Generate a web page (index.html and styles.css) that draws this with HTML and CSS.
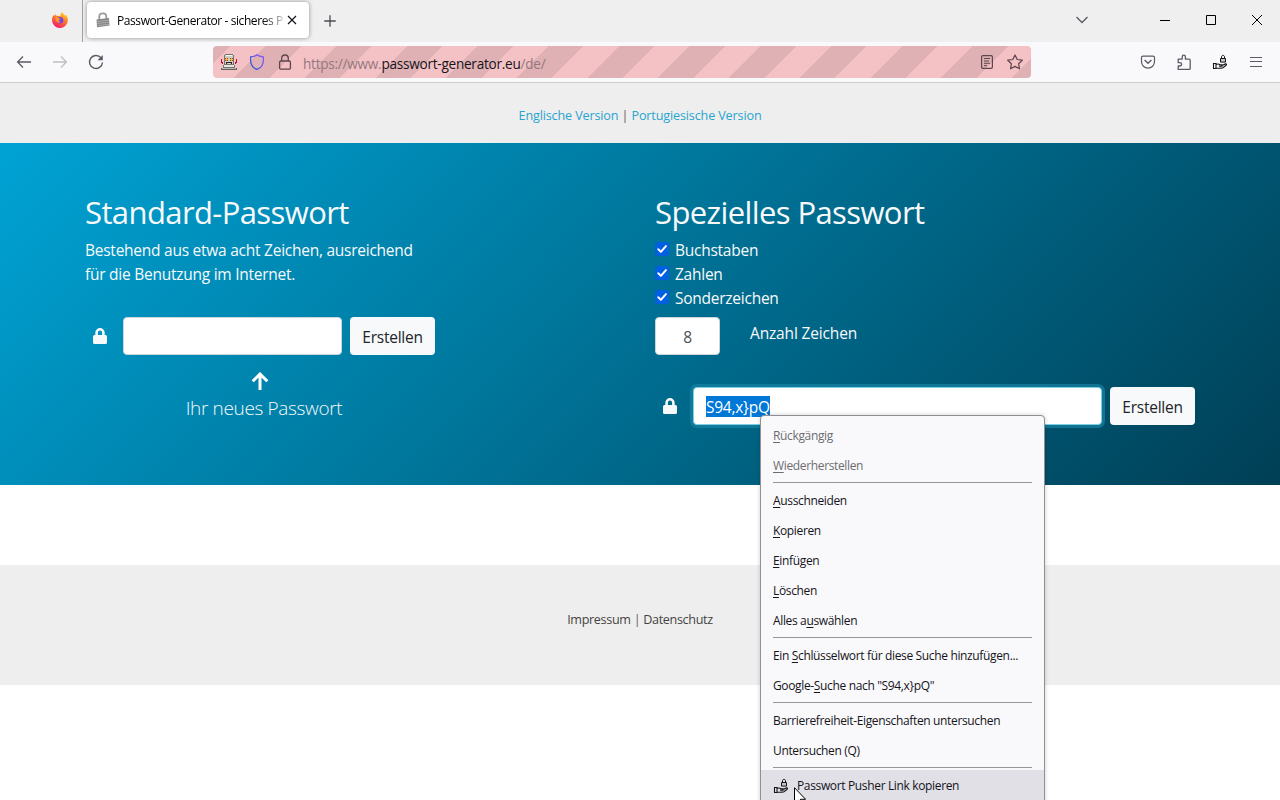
FILE: index.html
```html
<!DOCTYPE html>
<html lang="de">
<head>
<meta charset="utf-8">
<title>Passwort-Generator - sicheres Passwort</title>
<link rel="stylesheet" href="styles.css">
</head>
<body>
<svg class="defs" width="0" height="0">
  <symbol id="lock" viewBox="0 0 14 16"><path fill="currentColor" fill-rule="evenodd" d="M1.500 7H2.300V4.700a4.700 4.700 0 0 1 9.400 0V7h.8A1.500 1.500 0 0 1 14 8.500v6A1.500 1.500 0 0 1 12.500 16h-11A1.500 1.500 0 0 1 0 14.500v-6A1.500 1.500 0 0 1 1.500 7zM4.900 7h4.200V4.700a2.100 2.100 0 0 0-4.200 0z"/></symbol>
  <symbol id="check" viewBox="0 0 14 14"><rect width="14" height="14" rx="2" fill="#0060df"/><path d="M3.300 7.300l2.600 2.600 5-5.800" fill="none" stroke="#fff" stroke-width="2" stroke-linecap="round" stroke-linejoin="round"/></symbol>
  <symbol id="push" viewBox="0 0 16 16"><g fill="none" stroke="currentColor"><path d="M1.500 9.500h2.500v5H1.500zM4 10.500c1.600-.8 3-.6 4 .2h2v1.400H7M10 11.500l3.500-1.600c1.100-.2 1.300.7.6 1.400L11 13.700c-2 .6-4.500.6-7 .3" stroke-width="1.100"/><path d="M8.500 4.500h5v3.600h-5z" fill="#c4c4c8"/><path d="M9.500 4.500V3c0-2.200 3-2.200 3 0v1.500"/></g></symbol>
</svg>
<div class="window">
  <header class="tabbar">
    <div class="pinned">
      <svg width="16" height="16" viewBox="0 0 16 16"><defs><linearGradient id="fx" x1=".8" y1="0" x2=".3" y2="1"><stop offset="0" stop-color="#ffe226"/><stop offset=".45" stop-color="#ff7a2a"/><stop offset="1" stop-color="#f5156c"/></linearGradient></defs><path fill="url(#fx)" d="M10.300 0c.4 1.600 1.800 2.200 2.600 3.500.5-.1.700-.4.700-.8C15 4 16 6.200 15.900 8.300A7.900 7.900 0 0 1 8 16 7.900 7.900 0 0 1 0 8.200C0 6 .6 4.100 1.900 2.700l.5 1.400 1.400-2 .7 1.800c1.500-.5 2.900-.2 3.700.4C8.400 2.500 9 .9 10.300 0z"/><circle cx="8" cy="8.200" r="3.300" fill="#7542e5"/><path fill="#ff9a25" d="M3.300 5.400c1.500-.5 2.800-.2 3.600.8l1.800.4c-.2.900-1.500 1-1.900 1.600-.2.900.8 1.700 2.200 1.400-1 1.700-3.700 1.400-4.700-.5-.6-1.200-.8-2.500-1-3.700z"/></svg>
    </div>
    <div class="tab">
      <svg width="14" height="16" viewBox="0 0 14 16"><path d="M3.300 8V4.600c0-4.300 7-4.300 7 0V8" fill="none" stroke="#999" stroke-width="1.800"/><path d="M.5 7.400L13 6l.5 7.500-12.500 1.700z" fill="#858585"/><path d="M1 9.500l12-1.200M1.200 11.500l12-1.200M1.300 13.500l12-1.200" stroke="#bbb" stroke-width=".7"/></svg>
      <span class="tab-title">Passwort-Generator - sicheres P</span>
      <svg class="tab-close" width="10" height="10" viewBox="0 0 10 10"><path d="M1 1l8 8M9 1l-8 8" stroke="#15141a" stroke-width="1.200"/></svg>
    </div>
    <svg class="newtab" width="12" height="12" viewBox="0 0 12 12"><path d="M6 .3v11.400M.3 6h11.400" stroke="#4b4a54" stroke-width="1.300"/></svg>
    <div class="controls">
      <svg class="alltabs" width="14" height="10" viewBox="0 0 14 10"><path d="M1.500 2L7 7.500 12.500 2" fill="none" stroke="#5b5b66" stroke-width="1.300"/></svg>
      <svg width="10" height="10" viewBox="0 0 10 10"><path d="M0 5.500h10" stroke="#000"/></svg>
      <svg width="10" height="10" viewBox="0 0 10 10"><path d="M.5.5h9v9h-9z" fill="none" stroke="#000"/></svg>
      <svg width="10" height="10" viewBox="0 0 10 10"><path d="M0 0l10 10M10 0L0 10" stroke="#000"/></svg>
    </div>
  </header>
  <nav class="toolbar">
    <svg width="16" height="16" viewBox="0 0 16 16"><path d="M7 2.500L1.600 8 7 13.500M1.600 8H15" fill="none" stroke="#5b5b66" stroke-width="1.300"/></svg>
    <svg width="16" height="16" viewBox="0 0 16 16"><path d="M9 2.500L14.400 8 9 13.500M14.400 8H1" fill="none" stroke="#bfbfc3" stroke-width="1.300"/></svg>
    <svg width="16" height="16" viewBox="0 0 16 16"><path d="M13 3.800A6.500 6.500 0 1 0 14.500 8.500" fill="none" stroke="#5b5b66" stroke-width="1.400"/><path d="M14.800 1v5.300H9.500z" fill="#5b5b66"/></svg>
    <div class="urlbar">
      <svg width="16" height="16" viewBox="0 0 16 16" shape-rendering="crispEdges"><path d="M0 5h1v3h1v2H1V9H0zM16 5h-1v3h-1v2h1V9h1z" fill="#c00d2d"/><path d="M4 0h8v1h1v10H3V1h1z" fill="#77746e"/><path d="M4 1h8v9H4z" fill="#cfcfca"/><path d="M5 1h6v1H5z" fill="#f4f4f0"/><path d="M4 4h3v3H4zM9 4h3v3H9z" fill="#8a4a25"/><path d="M5 4h1v1h1v1H6v1H5V6H4V5h1zM10 4h1v1h1v1h-1v1h-1V6H9V5h1z" fill="#ffb53c"/><path d="M5 8h6v2h-1V9H6v1H5z" fill="#2c2020"/><path d="M2 11h12v3H2z" fill="#77746e"/><path d="M3 11h10v2H3z" fill="#e6e6e2"/><path d="M0 14h16v2H0z" fill="#66635e"/><path d="M1 14h14v1H1z" fill="#b5b5b0"/></svg>
      <svg width="16" height="16" viewBox="0 0 16 16"><defs><linearGradient id="sh" x1="1" y1="0" x2="0" y2="1"><stop offset="0" stop-color="#9059ff"/><stop offset="1" stop-color="#2455d0"/></linearGradient></defs><path d="M8 .8C6.500 2.200 3.500 2.800 1.600 3v3c0 5 3 8.200 6.400 9.400 3.400-1.200 6.400-4.400 6.400-9.400V3C12.500 2.800 9.500 2.200 8 .8z" fill="none" stroke="url(#sh)" stroke-width="1.300"/></svg>
      <svg width="16" height="16" viewBox="0 0 16 16"><rect x="2.600" y="7" width="10.800" height="8.200" rx="1.300" fill="none" stroke="#5f454d" stroke-width="1.300"/><path d="M4.700 7V4.300a3.300 3.300 0 0 1 6.600 0V7" fill="none" stroke="#5f454d" stroke-width="1.300"/></svg>
      <span class="url">https://www.<b>passwort-generator.eu</b>/de/</span>
      <svg class="reader" width="16" height="16" viewBox="0 0 16 16"><rect x="2.600" y="1.600" width="10.800" height="12.800" rx="1.300" fill="none" stroke="#5f454d" stroke-width="1.200"/><path d="M5 4.500h6M5 7h5M5 9.300h6M5 11.600h3" stroke="#5f454d"/></svg>
      <svg width="16" height="16" viewBox="0 0 16 16"><path d="M8 .9l2.200 4.600 5.100.7-3.700 3.500.9 5.100L8 12.400l-4.500 2.400.9-5.100L.7 6.200l5.100-.7z" fill="none" stroke="#5f454d" stroke-width="1.200" stroke-linejoin="round"/></svg>
    </div>
    <div class="tools">
      <svg width="16" height="16" viewBox="0 0 16 16"><path d="M3 2.100h10a1.500 1.500 0 0 1 1.500 1.500v4c0 3.700-2.800 6.500-6.500 6.500S1.500 11.300 1.500 7.600v-4A1.500 1.500 0 0 1 3 2.100z" fill="none" stroke="#5b5b66" stroke-width="1.200"/><path d="M4.600 6L8 9.200 11.400 6" fill="none" stroke="#5b5b66" stroke-width="1.400"/></svg>
      <svg width="16" height="16" viewBox="0 0 16 16"><path d="M2.200 15.400V12h1.700c2.300 0 2.300-3.300 0-3.300H2.200V5.200h4V3c0-2.400 3.200-2.400 3.200 0v2.200h3.800c.7 0 1 .4 1 1v8.200c0 .6-.3 1-1 1z" fill="none" stroke="#5b5b66" stroke-width="1.300" stroke-linejoin="round"/></svg>
      <svg width="16" height="16"><use href="#push"/></svg>
      <svg width="16" height="16" viewBox="0 0 16 16"><path d="M2 3.500h12M2 7.500h12M2 12.500h12" stroke="#5b5b66" stroke-width="1.100"/></svg>
    </div>
  </nav>
  <div class="langs"><p><a>Englische Version</a> <i>|</i> <a>Portugiesische Version</a></p></div>
  <main class="hero">
    <section class="col">
      <h2>Standard-Passwort</h2>
      <p class="lead">Bestehend aus etwa acht Zeichen, ausreichend<br>für die Benutzung im Internet.</p>
      <div class="row row-std">
        <svg class="lock" width="14" height="16"><use href="#lock"/></svg>
        <div class="field"></div>
        <div class="btn">Erstellen</div>
      </div>
      <div class="hint">
        <svg width="18" height="18" viewBox="0 0 18 18"><path d="M1.700 9.300L9 2l7.300 7.300M9 2.500V18" fill="none" stroke="#fff" stroke-width="3"/></svg>
        <span>Ihr neues Passwort</span>
      </div>
    </section>
    <section class="col">
      <h2>Spezielles Passwort</h2>
      <div class="checks">
        <label><svg width="14" height="14"><use href="#check"/></svg>Buchstaben</label>
        <label><svg width="14" height="14"><use href="#check"/></svg>Zahlen</label>
        <label><svg width="14" height="14"><use href="#check"/></svg>Sonderzeichen</label>
      </div>
      <div class="count"><div class="field num">8</div><span>Anzahl Zeichen</span></div>
      <div class="row row-spec">
        <svg class="lock" width="14" height="16"><use href="#lock"/></svg>
        <div class="field focus"><span class="sel">S94,x}pQ</span></div>
        <div class="btn">Erstellen</div>
      </div>
    </section>
  </main>
  <footer class="footer"><p><a>Impressum</a> <i>|</i> <a>Datenschutz</a></p></footer>
</div>
<div class="menu">
  <div class="item off"><span><u>R</u>ückgängig</span></div>
  <div class="item off"><span><u>W</u>iederherstellen</span></div>
  <hr>
  <div class="item"><span><u>A</u>usschneiden</span></div>
  <div class="item"><span><u>K</u>opieren</span></div>
  <div class="item"><span><u>E</u>infügen</span></div>
  <div class="item"><span><u>L</u>öschen</span></div>
  <div class="item"><span>Alles a<u>u</u>swählen</span></div>
  <hr>
  <div class="item"><span>Ein <u>S</u>chlüsselwort für diese Suche hinzufügen...</span></div>
  <div class="item"><span>Google-<u>S</u>uche nach "S94,x}pQ"</span></div>
  <hr>
  <div class="item"><span>Barrierefreiheit-Eigenschaften untersuchen</span></div>
  <div class="item"><span>Untersuchen (Q)</span></div>
  <hr>
  <div class="item hover"><svg width="16" height="16"><use href="#push"/></svg><span>Passwort Pusher Link kopieren</span></div>
</div>
<svg class="cursor" width="12" height="19" viewBox="0 0 12 19"><path d="M.5.700v16l3.700-3.600 2.400 5.400 2.200-1-2.400-5.200h5.200z" fill="#fff" stroke="#000"/></svg>
</body>
</html>
```
FILE: styles.css
```css
* { box-sizing: border-box; }
html, body { height: 100%; }
body {
  margin: 0;
  overflow: hidden;
  position: relative;
  background: #fff;
  color: #15141a;
  font-family: "Open Sans", "Noto Sans", sans-serif;
}
h2, p { margin: 0; font-weight: 400; }
svg { display: block; flex: none; }
.defs { position: absolute; }
.window { height: 800px; display: flex; flex-direction: column; overflow: hidden; }

/* tab strip */
.tabbar { height: 42px; flex: none; display: flex; align-items: center; background: #efefef; }
.pinned { width: 83px; height: 42px; padding: 12px 0 0 52px; border-right: 1px solid #a2a2a2; }
.tab {
  width: 222px; height: 36px; margin: -2px 0 0 4px; padding: 0 12px 0 9px;
  display: flex; align-items: center; background: #fff; border-radius: 4px;
  box-shadow: 0 0 4px rgba(0, 0, 0, .4);
}
.tab-title {
  width: 168px; margin-left: 7px; overflow: hidden; white-space: nowrap;
  font-size: 12px; letter-spacing: -.42px; color: #000;
  -webkit-mask-image: linear-gradient(to right, #000 145px, rgba(0, 0, 0, .2) 167px);
  mask-image: linear-gradient(to right, #000 145px, rgba(0, 0, 0, .2) 167px);
}
.tab-close { margin-left: 3px; }
.newtab { margin: -1px 0 0 15px; }
.controls { margin: -2px 18px 0 auto; display: flex; align-items: center; gap: 36px; }
.controls .alltabs { margin-right: 35px; }

/* toolbar */
.toolbar {
  height: 41px; flex: none; display: flex; align-items: center; gap: 20px;
  padding: 0 16px; background: #f9f9fb; border-bottom: 1px solid #ccc;
}
.urlbar {
  width: 818px; height: 32px; margin-left: 89px; padding: 0 8px;
  display: flex; align-items: center; gap: 12px; border-radius: 4px;
  background: repeating-linear-gradient(135deg, #e0b1b4 0, #e0b1b4 12.25px, #f4c2c5 12.25px, #f4c2c5 37.25px, #e0b1b4 37.25px, #e0b1b4 50px);
}
.url { margin: 2px 0 0 -2px; font-size: 13.6px; letter-spacing: -.26px; color: #94787e; white-space: nowrap; }
.url b { font-weight: 400; color: #15141a; }
.reader { margin-left: auto; }
.tools { display: flex; gap: 20px; margin-left: auto; }

/* page bands */
.langs, .footer { flex: none; display: flex; justify-content: center; background: #eee; font-size: 12.6px; }
.langs { height: 60px; padding-top: 23px; color: #28a4d0; letter-spacing: -.14px; }
.footer { height: 120px; margin-top: 80px; padding-top: 45px; color: #444; letter-spacing: -.33px; }
.langs p, .footer p { line-height: 20px; white-space: nowrap; }
.langs i, .footer i { font-style: normal; color: #655; }

/* hero */
.hero {
  height: 342px; flex: none; display: grid; grid-template-columns: 540px 540px; column-gap: 30px;
  padding: 50px 85px 0; color: #f8f9fa; font-size: 15.5px; letter-spacing: -.25px; line-height: 24px;
  background: linear-gradient(135deg, #00a3d5 0%, #003f55 100%);
}
.hero h2 { font-size: 31px; letter-spacing: -.6px; line-height: 38px; margin-bottom: 7px; white-space: nowrap; }
.lead { white-space: nowrap; }
.row { display: flex; align-items: center; height: 38px; padding-left: 8px; }
.row-std { margin-top: 31px; }
.row-spec { margin-top: 32px; }
.lock { margin-right: 16px; color: #f8f9fa; }
.field {
  width: 219px; height: 38px; background: #fff; border: 1px solid #ced4da; border-radius: 4px;
}
.btn {
  width: 85px; height: 38px; margin-left: 8px; padding-top: 8px; text-align: center;
  background: #f8f9fa; border-radius: 4px; color: #212529;
}
.hint { width: 350px; display: flex; flex-direction: column; align-items: center; margin-top: 17px; }
.hint span { margin: 6px 0 0 8px; font-size: 19px; letter-spacing: -.35px; font-weight: 300; }
.checks label { display: flex; height: 24px; }
.checks svg { margin: 4px 6px 0 0; }
.count { display: flex; margin-top: 7px; }
.num { width: 65px; padding-top: 7px; text-align: center; color: #495057; }
.count span { margin: 4px 0 0 30px; letter-spacing: -.16px; }
.focus {
  width: 409px; padding: 7px 12px; border-color: #7fcfe4;
  box-shadow: 0 0 0 3px rgba(23, 132, 164, .7);
}
.sel { display: inline-block; height: 21px; line-height: 23px; margin-top: 1px; background: #0078d7; color: #fff; }

/* context menu */
.menu {
  position: absolute; left: 760px; top: 415px; width: 285px; height: 400px; padding-top: 4px;
  background: #f9f9fb; border: 1px solid #8f8f94; border-radius: 4px;
  box-shadow: 0 0 4px rgba(0, 0, 0, .2);
}
.item { height: 30px; padding: 1px 12px 0; display: flex; align-items: center; font-size: 12px; letter-spacing: -.35px; white-space: nowrap; }
.item.off { color: #6d6d70; }
.item u { text-underline-offset: 2px; text-decoration-thickness: 1px; text-decoration-skip-ink: none; }
.item.hover { background: #e0e0e6; }
.item svg { margin-right: 8px; }
.menu hr { height: 1px; margin: 2px 12px; border: 0; background: #96969a; }
.cursor { position: absolute; left: 794px; top: 787px; }
```
